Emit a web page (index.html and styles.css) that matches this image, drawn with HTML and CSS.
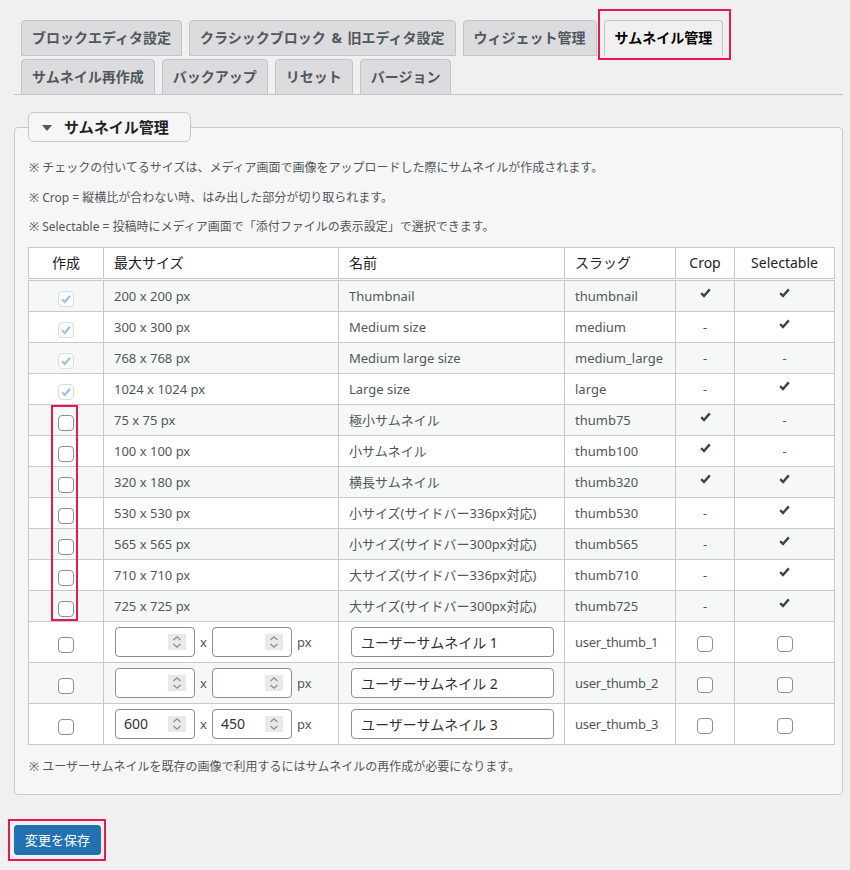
FILE: index.html
```html
<!DOCTYPE html>
<html lang="ja">
<head>
<meta charset="utf-8">
<title>サムネイル管理</title>
<link rel="stylesheet" href="styles.css">
</head>
<body>
<div class="wrap">
  <nav class="tabs">
    <a class="tab">ブロックエディタ設定</a>
    <a class="tab">クラシックブロック <span class="amp">&amp;</span> 旧エディタ設定</a>
    <a class="tab">ウィジェット管理</a>
    <a class="tab tab-active">サムネイル管理<span class="anno anno-tab"></span></a>
    <a class="tab">サムネイル再作成</a>
    <a class="tab">バックアップ</a>
    <a class="tab">リセット</a>
    <a class="tab">バージョン</a>
  </nav>

  <fieldset class="box">
    <legend class="box-title"><svg class="tri" width="10" height="6" viewBox="0 0 10 6"><path d="M0 0H10L5 6Z" fill="#50575e"/></svg><span>サムネイル管理</span></legend>
    <p class="note">※ チェックの付いてるサイズは、メディア画面で画像をアップロードした際にサムネイルが作成されます。</p>
    <p class="note">※ Crop = 縦横比が合わない時、はみ出した部分が切り取られます。</p>
    <p class="note last">※ Selectable = 投稿時にメディア画面で「添付ファイルの表示設定」で選択できます。</p>

    <table class="sizes">
      <colgroup>
        <col class="c1"><col class="c2"><col class="c3"><col class="c4"><col class="c5"><col class="c6">
      </colgroup>
      <thead>
        <tr><th class="ctr">作成</th><th>最大サイズ</th><th>名前</th><th>スラッグ</th><th class="ctr">Crop</th><th class="ctr">Selectable</th></tr>
      </thead>
      <tbody>
        <tr><td class="ctr"><span class="cb cb-dis"><svg width="14" height="14" viewBox="0 0 14 14"><path d="M3 7.3L5.8 10L11 3.8" fill="none" stroke="#9fc1e3" stroke-width="2.2"/></svg></span></td><td>200 x 200 px</td><td>Thumbnail</td><td>thumbnail</td><td class="ctr"><svg class="chk" width="11" height="10" viewBox="0 0 11 10"><path d="M1.2 5.2L4 8L9.8 1.4" fill="none" stroke="#3c434a" stroke-width="2.4"/></svg></td><td class="ctr"><svg class="chk" width="11" height="10" viewBox="0 0 11 10"><path d="M1.2 5.2L4 8L9.8 1.4" fill="none" stroke="#3c434a" stroke-width="2.4"/></svg></td></tr>
        <tr><td class="ctr"><span class="cb cb-dis"><svg width="14" height="14" viewBox="0 0 14 14"><path d="M3 7.3L5.8 10L11 3.8" fill="none" stroke="#9fc1e3" stroke-width="2.2"/></svg></span></td><td>300 x 300 px</td><td>Medium size</td><td>medium</td><td class="ctr">-</td><td class="ctr"><svg class="chk" width="11" height="10" viewBox="0 0 11 10"><path d="M1.2 5.2L4 8L9.8 1.4" fill="none" stroke="#3c434a" stroke-width="2.4"/></svg></td></tr>
        <tr><td class="ctr"><span class="cb cb-dis"><svg width="14" height="14" viewBox="0 0 14 14"><path d="M3 7.3L5.8 10L11 3.8" fill="none" stroke="#9fc1e3" stroke-width="2.2"/></svg></span></td><td>768 x 768 px</td><td>Medium large size</td><td>medium_large</td><td class="ctr">-</td><td class="ctr">-</td></tr>
        <tr><td class="ctr"><span class="cb cb-dis"><svg width="14" height="14" viewBox="0 0 14 14"><path d="M3 7.3L5.8 10L11 3.8" fill="none" stroke="#9fc1e3" stroke-width="2.2"/></svg></span></td><td>1024 x 1024 px</td><td>Large size</td><td>large</td><td class="ctr">-</td><td class="ctr"><svg class="chk" width="11" height="10" viewBox="0 0 11 10"><path d="M1.2 5.2L4 8L9.8 1.4" fill="none" stroke="#3c434a" stroke-width="2.4"/></svg></td></tr>
        <tr><td class="ctr anchor"><input type="checkbox" class="cb"><span class="anno anno-col"></span></td><td>75 x 75 px</td><td>極小サムネイル</td><td>thumb75</td><td class="ctr"><svg class="chk" width="11" height="10" viewBox="0 0 11 10"><path d="M1.2 5.2L4 8L9.8 1.4" fill="none" stroke="#3c434a" stroke-width="2.4"/></svg></td><td class="ctr">-</td></tr>
        <tr><td class="ctr"><input type="checkbox" class="cb"></td><td>100 x 100 px</td><td>小サムネイル</td><td>thumb100</td><td class="ctr"><svg class="chk" width="11" height="10" viewBox="0 0 11 10"><path d="M1.2 5.2L4 8L9.8 1.4" fill="none" stroke="#3c434a" stroke-width="2.4"/></svg></td><td class="ctr">-</td></tr>
        <tr><td class="ctr"><input type="checkbox" class="cb"></td><td>320 x 180 px</td><td>横長サムネイル</td><td>thumb320</td><td class="ctr"><svg class="chk" width="11" height="10" viewBox="0 0 11 10"><path d="M1.2 5.2L4 8L9.8 1.4" fill="none" stroke="#3c434a" stroke-width="2.4"/></svg></td><td class="ctr"><svg class="chk" width="11" height="10" viewBox="0 0 11 10"><path d="M1.2 5.2L4 8L9.8 1.4" fill="none" stroke="#3c434a" stroke-width="2.4"/></svg></td></tr>
        <tr><td class="ctr"><input type="checkbox" class="cb"></td><td>530 x 530 px</td><td>小サイズ(サイドバー336px対応)</td><td>thumb530</td><td class="ctr">-</td><td class="ctr"><svg class="chk" width="11" height="10" viewBox="0 0 11 10"><path d="M1.2 5.2L4 8L9.8 1.4" fill="none" stroke="#3c434a" stroke-width="2.4"/></svg></td></tr>
        <tr><td class="ctr"><input type="checkbox" class="cb"></td><td>565 x 565 px</td><td>小サイズ(サイドバー300px対応)</td><td>thumb565</td><td class="ctr">-</td><td class="ctr"><svg class="chk" width="11" height="10" viewBox="0 0 11 10"><path d="M1.2 5.2L4 8L9.8 1.4" fill="none" stroke="#3c434a" stroke-width="2.4"/></svg></td></tr>
        <tr><td class="ctr"><input type="checkbox" class="cb"></td><td>710 x 710 px</td><td>大サイズ(サイドバー336px対応)</td><td>thumb710</td><td class="ctr">-</td><td class="ctr"><svg class="chk" width="11" height="10" viewBox="0 0 11 10"><path d="M1.2 5.2L4 8L9.8 1.4" fill="none" stroke="#3c434a" stroke-width="2.4"/></svg></td></tr>
        <tr><td class="ctr"><input type="checkbox" class="cb"></td><td>725 x 725 px</td><td>大サイズ(サイドバー300px対応)</td><td>thumb725</td><td class="ctr">-</td><td class="ctr"><svg class="chk" width="11" height="10" viewBox="0 0 11 10"><path d="M1.2 5.2L4 8L9.8 1.4" fill="none" stroke="#3c434a" stroke-width="2.4"/></svg></td></tr>

        <tr class="user"><td class="ctr"><input type="checkbox" class="cb"></td>
          <td><div class="size-inputs"><div class="num"><input type="text" value=""><span class="spin"><svg width="10" height="14" viewBox="0 0 10 14"><path d="M1.5 5L5 1.8L8.5 5M1.5 9L5 12.2L8.5 9" fill="none" stroke="#8c8f94" stroke-width="1.3"/></svg></span></div><span class="x">x</span><div class="num"><input type="text" value=""><span class="spin"><svg width="10" height="14" viewBox="0 0 10 14"><path d="M1.5 5L5 1.8L8.5 5M1.5 9L5 12.2L8.5 9" fill="none" stroke="#8c8f94" stroke-width="1.3"/></svg></span></div><span class="x">px</span></div></td>
          <td><input type="text" class="name" value="ユーザーサムネイル 1"></td><td class="slug">user_thumb_1</td><td class="ctr"><input type="checkbox" class="cb cb-u"></td><td class="ctr"><input type="checkbox" class="cb cb-u"></td></tr>
        <tr class="user"><td class="ctr"><input type="checkbox" class="cb"></td>
          <td><div class="size-inputs"><div class="num"><input type="text" value=""><span class="spin"><svg width="10" height="14" viewBox="0 0 10 14"><path d="M1.5 5L5 1.8L8.5 5M1.5 9L5 12.2L8.5 9" fill="none" stroke="#8c8f94" stroke-width="1.3"/></svg></span></div><span class="x">x</span><div class="num"><input type="text" value=""><span class="spin"><svg width="10" height="14" viewBox="0 0 10 14"><path d="M1.5 5L5 1.8L8.5 5M1.5 9L5 12.2L8.5 9" fill="none" stroke="#8c8f94" stroke-width="1.3"/></svg></span></div><span class="x">px</span></div></td>
          <td><input type="text" class="name" value="ユーザーサムネイル 2"></td><td class="slug">user_thumb_2</td><td class="ctr"><input type="checkbox" class="cb cb-u"></td><td class="ctr"><input type="checkbox" class="cb cb-u"></td></tr>
        <tr class="user"><td class="ctr"><input type="checkbox" class="cb"></td>
          <td><div class="size-inputs"><div class="num"><input type="text" value="600"><span class="spin"><svg width="10" height="14" viewBox="0 0 10 14"><path d="M1.5 5L5 1.8L8.5 5M1.5 9L5 12.2L8.5 9" fill="none" stroke="#8c8f94" stroke-width="1.3"/></svg></span></div><span class="x">x</span><div class="num"><input type="text" value="450"><span class="spin"><svg width="10" height="14" viewBox="0 0 10 14"><path d="M1.5 5L5 1.8L8.5 5M1.5 9L5 12.2L8.5 9" fill="none" stroke="#8c8f94" stroke-width="1.3"/></svg></span></div><span class="x">px</span></div></td>
          <td><input type="text" class="name" value="ユーザーサムネイル 3"></td><td class="slug">user_thumb_3</td><td class="ctr"><input type="checkbox" class="cb cb-u"></td><td class="ctr"><input type="checkbox" class="cb cb-u"></td></tr>
      </tbody>
    </table>

    <p class="note foot">※ ユーザーサムネイルを既存の画像で利用するにはサムネイルの再作成が必要になります。</p>
  </fieldset>

  <div class="submit">
    <button type="button" class="btn-primary">変更を保存</button>
    <span class="anno anno-btn"></span>
  </div>
</div>
</body>
</html>
```

FILE: styles.css
```css
html, body {
  margin: 0;
  padding: 0;
}
body {
  background: #f0f0f1;
  font-family: "Noto Sans", "Noto Sans CJK JP", sans-serif;
  color: #50575e;
}
.wrap {
  width: 850px;
  padding-bottom: 10px;
}

/* Tabs */
.tabs {
  display: flex;
  flex-wrap: wrap;
  gap: 4px 7px;
  margin: 0 7px 0 14px;
  padding: 20px 0 0 7px;
  border-bottom: 1px solid #c3c4c7;
}
.tab {
  position: relative;
  display: block;
  box-sizing: border-box;
  height: 36px;
  margin-bottom: -1px;
  padding: 0 10px;
  border: 1px solid #c3c4c7;
  border-radius: 4px 4px 0 0;
  background: #dcdcde;
  color: #50575e;
  font-family: "Noto Sans", "Noto Sans CJK JP", sans-serif;
  font-size: 14px;
  font-weight: 700;
  line-height: 34px;
  white-space: nowrap;
}
.amp {
  margin: 0 2px;
}
.tab-active {
  background: #f0f0f1;
  border-bottom-color: #f0f0f1;
  color: #000;
}

/* Annotations */
.anno {
  position: absolute;
  box-sizing: border-box;
  border: 2px solid #e8194d;
  pointer-events: none;
}
.anno-tab {
  left: -7px;
  top: -12px;
  right: -9px;
  bottom: -5px;
}

/* Box */
.box {
  margin: 17px 7px 0 14px;
  padding: 17px 7px 18px 13px;
  border: 1px solid #c8c8c8;
  border-radius: 4px;
  background: #f6f6f6;
  min-width: 0;
}
.box-title {
  display: flex;
  align-items: center;
  box-sizing: border-box;
  height: 30px;
  margin-left: 0;
  padding: 0 21px 0 13px;
  border: 1px solid #c8c8c8;
  border-radius: 6px;
  background: #f6f6f6;
  color: #1d2327;
  font-size: 15px;
  font-weight: 700;
  line-height: 28px;
}
.tri {
  margin: 1px 12px 0 0;
}
.note {
  margin: 0 0 11.5px;
  padding-left: 1px;
  font-size: 12px;
  line-height: 18px;
  color: #50575e;
}
.note.last {
  margin-bottom: 10.5px;
}
.note.foot {
  margin: 13px 0 0;
}

/* Table */
.sizes {
  width: 806px;
  table-layout: fixed;
  border-collapse: collapse;
  background: #fff;
  border: 1px solid #c8c8c8;
  font-size: 13px;
}
.c1 { width: 75px; }
.c2 { width: 235px; }
.c3 { width: 226px; }
.c4 { width: 111px; }
.c5 { width: 59px; }
.c6 { width: 100px; }
.sizes th {
  height: 30px;
  padding: 0 10px;
  border: 1px solid #c8c8c8;
  border-bottom: 3px double #c8c8c8;
  background: #fff;
  color: #1d2327;
  font-size: 14px;
  font-weight: 400;
  text-align: left;
  line-height: 20px;
}
.sizes th.ctr {
  padding: 0 4px;
}
.sizes td {
  height: 30px;
  padding: 0 10px;
  border: 1px solid #c8c8c8;
  color: #50575e;
  line-height: 18px;
  white-space: nowrap;
}
.sizes td.ctr {
  padding: 0 4px;
}
.sizes td.slug {
  letter-spacing: -0.3px;
}
.sizes tbody tr:nth-child(odd) td {
  background: #f6f7f7;
}
.sizes .ctr {
  text-align: center;
}
.sizes tr.user td {
  height: 40px;
}
.anchor {
  position: relative;
}
.anno-col {
  left: 22px;
  top: 0;
  width: 27px;
  height: 216px;
}

/* checkboxes */
.cb {
  display: block;
  box-sizing: border-box;
  width: 16px;
  height: 16px;
  margin: 6px auto 0;
  padding: 0;
  border: 1px solid #8c8f94;
  border-radius: 4px;
  background: #fff;
  appearance: none;
  -webkit-appearance: none;
}
.cb-dis {
  display: flex;
  align-items: center;
  justify-content: center;
  border-color: #dcdcde;
  background: #fbfbfb;
}
.cb-u {
  margin-top: 4px;
}
.chk {
  display: inline-block;
  vertical-align: 3px;
}

/* inputs */
.size-inputs {
  display: flex;
  align-items: center;
  gap: 5px;
  margin-left: 1px;
}
.num {
  display: flex;
  align-items: center;
  box-sizing: border-box;
  width: 80px;
  height: 30px;
  padding: 0 8px;
  border: 1px solid #8c8f94;
  border-radius: 4px;
  background: #fff;
}
.num input {
  flex: 1;
  min-width: 0;
  width: 40px;
  padding: 0;
  border: 0;
  outline: none;
  background: transparent;
  color: #2c3338;
  font-family: "Noto Sans", "Noto Sans CJK JP", sans-serif;
  font-size: 14px;
}
.spin {
  flex: none;
  display: flex;
  align-items: center;
  justify-content: center;
  width: 18px;
  height: 16px;
  background: #e9e9ed;
}
.x {
  color: #50575e;
  font-size: 13px;
}
.name {
  display: block;
  box-sizing: border-box;
  width: 203px;
  height: 30px;
  margin-left: 2px;
  padding: 0 9px;
  border: 1px solid #8c8f94;
  border-radius: 4px;
  background: #fff;
  color: #2c3338;
  font-family: "Noto Sans", "Noto Sans CJK JP", sans-serif;
  font-size: 14px;
}

/* submit */
.submit {
  position: relative;
  display: inline-block;
  margin: 30px 0 0 14px;
}
.btn-primary {
  display: block;
  box-sizing: border-box;
  height: 30px;
  padding: 0 10px;
  border: 1px solid #2271b1;
  border-radius: 3px;
  background: #2271b1;
  color: #fff;
  font-family: "Noto Sans", "Noto Sans CJK JP", sans-serif;
  font-size: 13px;
  line-height: 28px;
}
.anno-btn {
  left: -6px;
  top: -6px;
  right: -5px;
  bottom: -6px;
}
```
